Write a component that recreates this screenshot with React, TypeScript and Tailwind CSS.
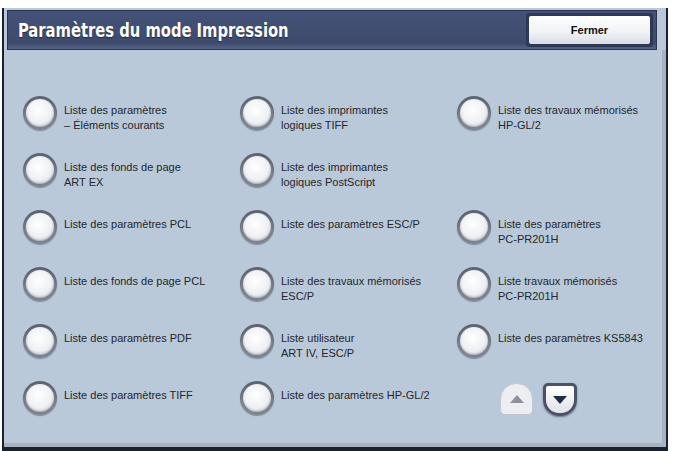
import React from 'react';

type Item = { lines: string[] } | null;

const items: Item[] = [
  { lines: ['Liste des paramètres', '– Éléments courants'] },
  { lines: ['Liste des imprimantes', 'logiques TIFF'] },
  { lines: ['Liste des travaux mémorisés', 'HP-GL/2'] },
  { lines: ['Liste des fonds de page', 'ART EX'] },
  { lines: ['Liste des imprimantes', 'logiques PostScript'] },
  null,
  { lines: ['Liste des paramètres PCL'] },
  { lines: ['Liste des paramètres ESC/P'] },
  { lines: ['Liste des paramètres', 'PC-PR201H'] },
  { lines: ['Liste des fonds de page PCL'] },
  { lines: ['Liste des travaux mémorisés', 'ESC/P'] },
  { lines: ['Liste travaux mémorisés', 'PC-PR201H'] },
  { lines: ['Liste des paramètres PDF'] },
  { lines: ['Liste utilisateur', 'ART IV, ESC/P'] },
  { lines: ['Liste des paramètres KS5843'] },
  { lines: ['Liste des paramètres TIFF'] },
  { lines: ['Liste des paramètres HP-GL/2'] },
];

function Radio() {
  return (
    <div className="w-[34px] h-[34px] shrink-0 rounded-full bg-[radial-gradient(circle_at_50%_60%,#7d838e_55%,#5b616c_72%,#9aa0aa)] p-[3px] shadow-[0_1px_1px_rgba(40,50,70,0.4)]">
      <div className="w-full h-full rounded-full bg-[radial-gradient(circle_at_45%_40%,#ffffff,#eef0f3_55%,#c9cdd4)] shadow-[inset_0_-1px_2px_rgba(60,70,90,0.35)]" />
    </div>
  );
}

function Option({ lines }: { lines: string[] }) {
  return (
    <div className="flex items-start gap-[7px]">
      <Radio />
      <div className="mt-[7px] text-[11px] leading-[15px] text-[#25262b]">
        {lines.map((l) => (
          <div key={l}>{l}</div>
        ))}
      </div>
    </div>
  );
}

function Pager() {
  return (
    <div className="flex gap-[10px] pl-[43px] pt-[2px]">
      <div className="w-[33px] h-[32px] rounded-t-[16px] rounded-b-[5px] bg-[#eceef1] border border-[#c3c9d2] flex items-center justify-center">
        <svg width="14" height="8" viewBox="0 0 14 8">
          <path d="M7 0 L14 8 L0 8 Z" fill="#8e9199" />
        </svg>
      </div>
      <div className="w-[34px] h-[33px] rounded-b-[16px] rounded-t-[5px] bg-[linear-gradient(#ffffff,#dfe2e7)] border-[3px] border-[#4a5368] shadow-[0_1px_2px_rgba(20,30,50,0.5)] flex items-center justify-center">
        <svg width="14" height="8" viewBox="0 0 14 8">
          <path d="M0 0 L14 0 L7 8 Z" fill="#232c45" />
        </svg>
      </div>
    </div>
  );
}

export default function App() {
  return (
    <div className="w-[673px] h-[451px] bg-white pt-[8px] pl-[2px] overflow-hidden font-['Liberation_Sans',Arial,sans-serif]">
      <div className="w-[666px] h-[443px] bg-[#b9c9da] border-l-2 border-r-2 border-b-4 border-[#1a2130] flex flex-col">
        <div className="flex">
          <div className="ml-[3px] mt-[2px] w-[650px] h-[40px] bg-[linear-gradient(#44527a,#3e4b6b_85%,#56658a)] border border-[#2a3450] flex items-center justify-between pl-[10px] pr-[3px]">
            <h1 className="text-white font-bold text-[20px] leading-none font-['DejaVu_Sans_Condensed',sans-serif] scale-x-[0.82] origin-left whitespace-nowrap [text-shadow:0_1px_1px_rgba(0,0,0,0.5)]">
              Paramètres du mode Impression
            </h1>
            <button className="w-[127px] h-[34px] rounded-[3px] bg-[#2d3955] p-[3px]">
              <div className="w-full h-full rounded-[2px] bg-[linear-gradient(#ffffff,#eff1f4_60%,#d9dde4)] flex items-center justify-center text-[11px] font-bold text-[#111]">
                Fermer
              </div>
            </button>
          </div>
        </div>
        <div className="flex-1 pl-[19px] pt-[46px] border-r-4 border-b-4 border-[#a9b3c0]">
          <div className="grid grid-cols-[217px_217px_200px] auto-rows-[57px]">
            {items.map((it, i) => (
              <div key={i}>{it && <Option lines={it.lines} />}</div>
            ))}
            <Pager />
          </div>
        </div>
      </div>
    </div>
  );
}
